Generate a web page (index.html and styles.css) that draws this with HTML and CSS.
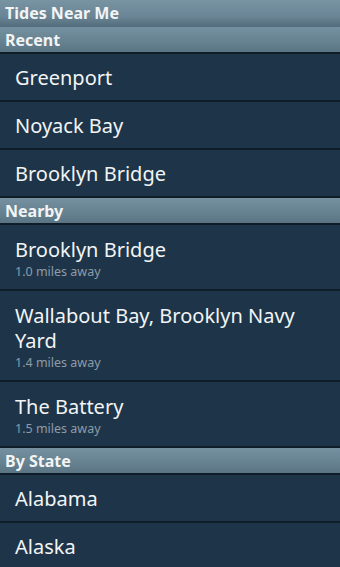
FILE: index.html
```html
<!DOCTYPE html>
<html>
<head>
<meta charset="utf-8">
<link rel="stylesheet" href="styles.css">
</head>
<body>
<div class="app">
  <div class="titlebar">Tides Near Me</div>
  <div class="section">Recent</div>
  <div class="row"><div class="name">Greenport</div></div>
  <div class="row"><div class="name">Noyack Bay</div></div>
  <div class="row"><div class="name">Brooklyn Bridge</div></div>
  <div class="section">Nearby</div>
  <div class="row two"><div class="name">Brooklyn Bridge</div><div class="sub">1.0 miles away</div></div>
  <div class="row two"><div class="name">Wallabout Bay, Brooklyn Navy Yard</div><div class="sub">1.4 miles away</div></div>
  <div class="row two"><div class="name">The Battery</div><div class="sub">1.5 miles away</div></div>
  <div class="section">By State</div>
  <div class="row"><div class="name">Alabama</div></div>
  <div class="row"><div class="name">Alaska</div></div>
</div>
</body>
</html>
```
FILE: styles.css
```css
html, body {
  margin: 0;
  padding: 0;
  background: #1e3549;
  height: 100%;
  overflow: hidden;
}
.app {
  font-family: "Noto Sans", "Open Sans", sans-serif;
  color: #f2f4f5;
  display: flex;
  flex-direction: column;
}
.titlebar {
  height: 27px;
  box-sizing: border-box;
  padding: 2px 5px 0;
  font-size: 16px;
  font-weight: bold;
  line-height: 22px;
  background: linear-gradient(#7893a2, #6a8595 60%, #536c7b);
}
.section {
  height: 27px;
  box-sizing: border-box;
  padding: 2px 5px 0;
  font-size: 16px;
  font-weight: bold;
  line-height: 22px;
  background: linear-gradient(#7590a0, #66818f 60%, #5a7483);
  border-bottom: 2px solid #0f1d29;
}
.row {
  min-height: 46px;
  box-sizing: content-box;
  border-bottom: 2px solid #0f1d29;
  display: flex;
  flex-direction: column;
  justify-content: center;
  padding: 0 15px;
}
.row.two {
  padding-top: 12px;
  padding-bottom: 10px;
  min-height: 0;
}
.name {
  font-size: 20px;
  line-height: 25px;
}
.sub {
  font-size: 12.5px;
  line-height: 17px;
  margin-top: 1px;
  margin-bottom: -1px;
  color: #8d9ca8;
}
```
